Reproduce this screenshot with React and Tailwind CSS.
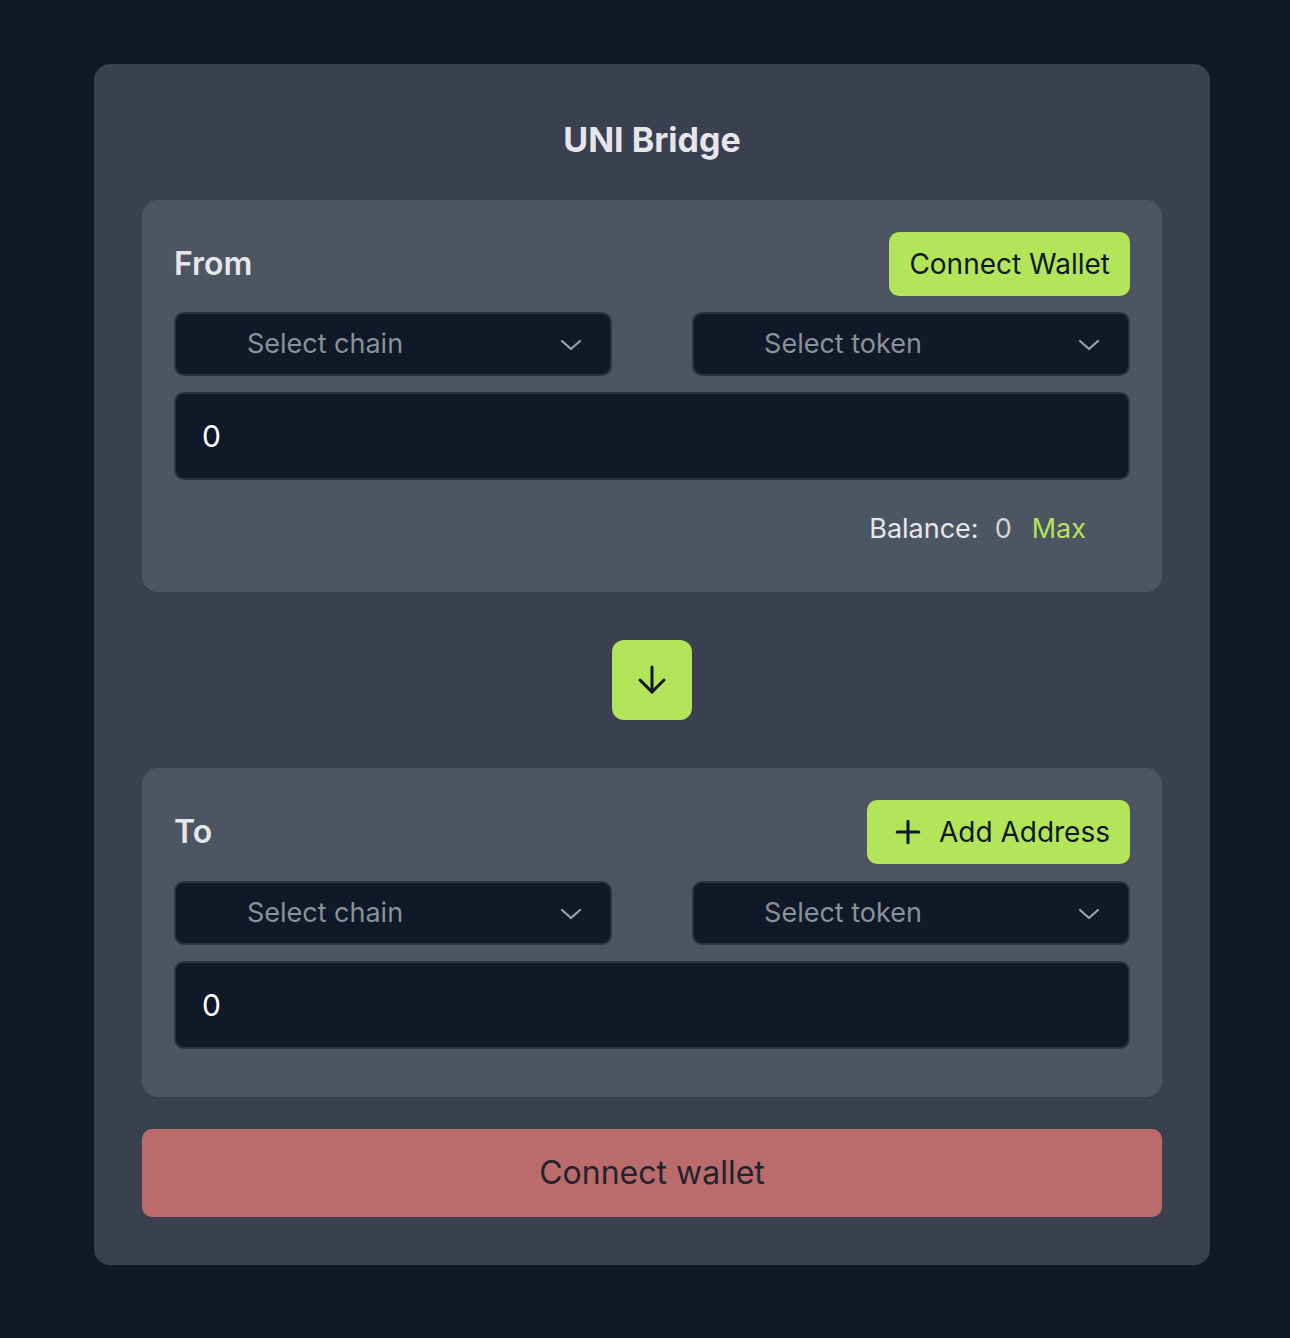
import React from "react";

const font = { fontFamily: "Inter, 'Noto Sans', sans-serif" };

function Chevron() {
  return (
    <svg width="22" height="12" viewBox="0 0 22 12" fill="none" stroke="#9ca3af" strokeWidth="2.2" strokeLinecap="round" strokeLinejoin="round">
      <path d="M2 2l9 8 9-8" />
    </svg>
  );
}

function Select({ label }) {
  return (
    <div className="flex h-[64px] flex-1 items-center rounded-[10px] border-2 border-[#2c3240] bg-[#111827]">
      <div className="flex flex-1 justify-center text-[27px] text-[#8a909c]">{label}</div>
      <div className="flex w-[136px] justify-end pr-[28px] pt-[2px]">
        <Chevron />
      </div>
    </div>
  );
}

function Amount() {
  return (
    <div className="flex h-[88px] items-center rounded-[10px] border-2 border-[#2c3240] bg-[#111827] px-[26px] text-[30px] text-white">
      0
    </div>
  );
}

export default function App() {
  return (
    <div style={font} className="flex min-h-[1338px] w-full justify-center bg-[#111827] pl-[14px] pt-[64px]">
      <div className="flex h-[1201px] w-[1116px] flex-col rounded-[16px] bg-[#3a4050] px-[48px] pt-[48px]">
        <h1 className="mb-[32px] text-center text-[34px] font-bold leading-[56px] text-[#e5e7eb]">UNI Bridge</h1>

        <div className="flex h-[392px] flex-col rounded-[16px] bg-[#4d5462] px-[32px] pt-[32px]">
          <div className="flex h-[64px] items-center justify-between">
            <span className="text-[32px] font-semibold text-[#e5e7eb]">From</span>
            <button className="flex h-[64px] items-center rounded-[10px] bg-[#b3e55a] px-[20px] text-[28px] text-[#111827]">
              Connect Wallet
            </button>
          </div>
          <div className="mt-[16px] flex gap-[80px]">
            <Select label="Select chain" />
            <Select label="Select token" />
          </div>
          <div className="mt-[16px]">
            <Amount />
          </div>
          <div className="mt-[29px] flex items-center justify-end gap-[16px] pr-[44px] text-[27px]">
            <span className="text-[#e5e7eb]">Balance:</span>
            <span className="text-[#d1d5db]">0</span>
            <span className="ml-[4px] text-[#b3e55a]">Max</span>
          </div>
        </div>

        <div className="flex justify-center py-[48px]">
          <button className="flex h-[80px] w-[80px] items-center justify-center rounded-[12px] bg-[#b3e55a]">
            <svg width="30" height="30" viewBox="0 0 30 30" fill="none" stroke="#111827" strokeWidth="3" strokeLinecap="round" strokeLinejoin="round">
              <path d="M15 2v25" />
              <path d="M3 15l12 12 12-12" />
            </svg>
          </button>
        </div>

        <div className="flex h-[329px] flex-col rounded-[16px] bg-[#4d5462] px-[32px] pt-[32px]">
          <div className="flex h-[64px] items-center justify-between">
            <span className="text-[32px] font-semibold text-[#e5e7eb]">To</span>
            <button className="flex h-[64px] items-center gap-[18px] rounded-[10px] bg-[#b3e55a] pl-[28px] pr-[20px] text-[28px] text-[#111827]">
              <svg width="26" height="26" viewBox="0 0 24 24" fill="none" stroke="#111827" strokeWidth="2.8" strokeLinecap="round">
                <path d="M12 2v20M2 12h20" />
              </svg>
              Add Address
            </button>
          </div>
          <div className="mt-[17px] flex gap-[80px]">
            <Select label="Select chain" />
            <Select label="Select token" />
          </div>
          <div className="mt-[16px]">
            <Amount />
          </div>
        </div>

        <button className="mt-[32px] flex h-[88px] w-full items-center justify-center rounded-[10px] bg-[#bc6b6b] text-[32px] text-[#1f2430]">
          Connect wallet
        </button>
      </div>
    </div>
  );
}
